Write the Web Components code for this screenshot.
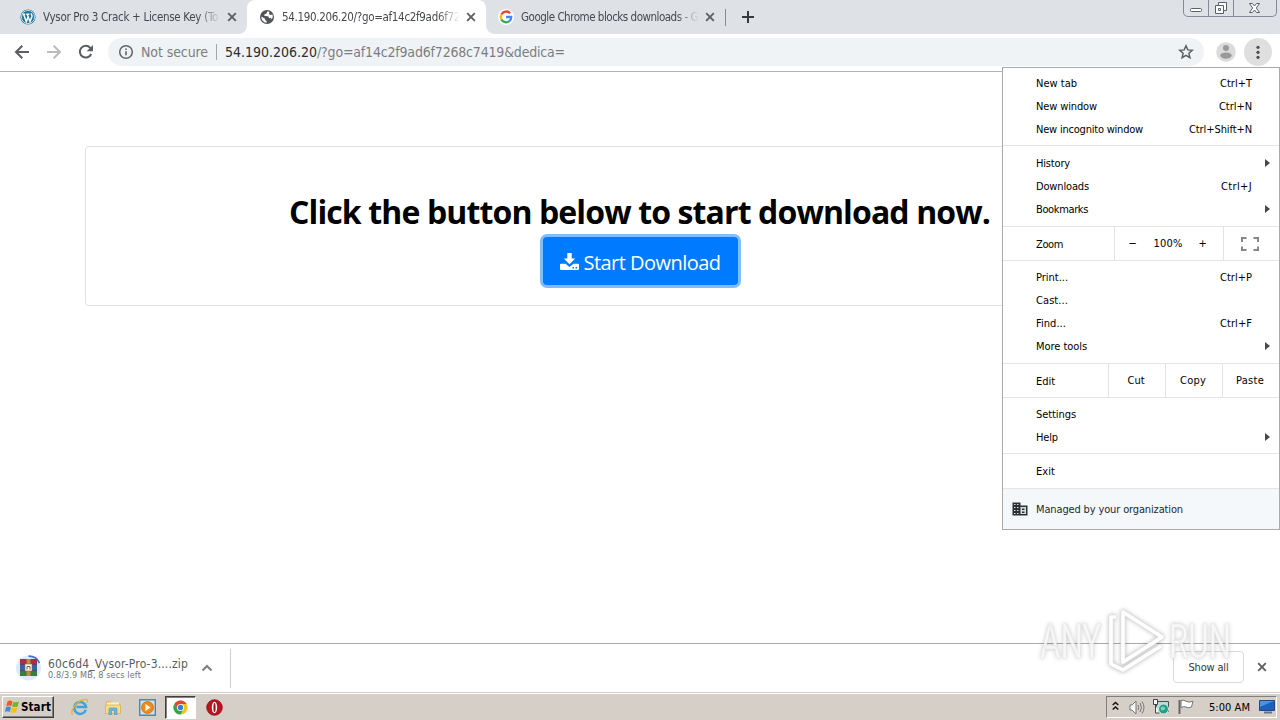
<!DOCTYPE html>
<html lang="en">
<head>
<meta charset="utf-8">
<title>54.190.206.20/?go=af14c2f9ad6f7268c7419&amp;dedica=</title>
<style>
html, body {
  margin: 0;
  height: 100%;
}

body {
  overflow: hidden;
  background: #fff;
  font-family: "DejaVu Sans Condensed", "DejaVu Sans", sans-serif;
}
</style>
</head>
<body>
<desktop-screen></desktop-screen>
<script>
// ================================================
// Icons
// ================================================
const ICONS = {
  wordpress: `<svg width="16" height="16" viewBox="0 0 16 16"><circle cx="8" cy="8" r="7.6" fill="#21759b"/><circle cx="8" cy="8" r="6.6" fill="none" stroke="#e6f1f6" stroke-width=".8"/><path d="M2.6 5.2h2.6M6.2 5.2h3.2M3.6 5.3l2.7 7.4 2-5.2M7.2 5.3l2.8 7.4 1.9-5c.5-1.5-.9-2.2-.5-3.4" fill="none" stroke="#fff" stroke-width="1.5"/></svg>`,
  globe: `<svg width="16" height="16" viewBox="0 0 16 16"><circle cx="8" cy="8" r="7" fill="#505357"/><path d="M2.3 7.5 6 9.8l.3 1.5 1.3.8v1.7A6 6 0 0 1 2.3 7.5zM8.6 2.2 7.2 4.8l-2 .8.4 1.5 3.4.2 1.4 2 1.9-.2.4 1.6a6 6 0 0 0 .9-5.2l-2.2.6-1.3-1.2.2-2.1z" fill="#fff"/></svg>`,
  google: `<svg width="16" height="16" viewBox="0 0 16 16"><circle cx="8" cy="8" r="8" fill="#fff"/><g fill="none" stroke-width="2.3"><path d="M12.1 4.3A5.3 5.3 0 0 0 3.4 5.4" stroke="#ea4335"/><path d="M3.4 5.4a5.4 5.4 0 0 0 0 5.2" stroke="#fbbc05"/><path d="M3.4 10.6a5.3 5.3 0 0 0 8 1.5" stroke="#34a853"/><path d="M11.4 12.1A5.2 5.2 0 0 0 13.2 8H8.1" stroke="#4285f4"/></g></svg>`,
  close: `<svg width="16" height="16" viewBox="0 0 16 16"><path d="m4.2 4.2 7.6 7.6m0-7.6-7.6 7.6" stroke="#5d6064" stroke-width="1.9"/></svg>`,
  plus: `<svg width="16" height="16" viewBox="0 0 16 16"><path d="M8 2v12M2 8h12" stroke="#36393d" stroke-width="2"/></svg>`,
  back: `<svg width="16" height="16" viewBox="0 0 16 16"><path d="M15 8H2.5M8.3 1.7 2 8l6.3 6.3" fill="none" stroke="#5a5d61" stroke-width="2"/></svg>`,
  forward: `<svg width="16" height="16" viewBox="0 0 16 16"><path d="M1 8h12.5M7.7 1.7 14 8l-6.3 6.3" fill="none" stroke="#babcbe" stroke-width="2"/></svg>`,
  reload: `<svg width="16" height="16" viewBox="0 0 16 16"><path d="M13.2 10a5.9 5.9 0 1 1-1-6.2l1.2 1.4" fill="none" stroke="#5a5d61" stroke-width="2"/><path d="M15 1v6.3H8.7z" fill="#5a5d61"/></svg>`,
  info: `<svg width="16" height="16" viewBox="0 0 16 16"><circle cx="8" cy="8" r="6.3" fill="none" stroke="#5f6368" stroke-width="1.5"/><path d="M8 7.2v4M8 4.4v1.6" stroke="#5f6368" stroke-width="1.6"/></svg>`,
  star: `<svg width="16" height="16" viewBox="0 0 16 16"><path d="m8 1.8 1.8 4.1 4.5.4-3.4 3 1 4.4L8 11.4l-3.9 2.3 1-4.4-3.4-3 4.5-.4z" fill="none" stroke="#5a5d62" stroke-width="1.5"/></svg>`,
  avatar: `<svg width="20" height="20" viewBox="0 0 20 20"><circle cx="10" cy="10" r="9.8" fill="#dbdbdb"/><circle cx="10" cy="6.1" r="3" fill="#999"/><ellipse cx="10" cy="13.6" rx="5.7" ry="3.2" fill="#999"/></svg>`,
  dots: `<svg width="28" height="28" viewBox="0 0 28 28"><circle cx="14" cy="14" r="14" fill="#dfdfdf"/><g fill="#4b4d50"><circle cx="14" cy="9.3" r="1.6"/><circle cx="14" cy="14.3" r="1.6"/><circle cx="14" cy="19.3" r="1.6"/></g></svg>`,
  minimize: `<svg width="24" height="16" viewBox="0 0 24 16"><rect x="6.5" y="8.5" width="11" height="3" rx="1" fill="#fff" stroke="#5b5f69"/></svg>`,
  restore: `<svg width="24" height="16" viewBox="0 0 24 16"><path d="M9.5 2.5h8v8h-8z" fill="#fff" stroke="#5b5f69"/><path d="M6.5 5.5h8v8h-8z" fill="#fff" stroke="#5b5f69"/><path d="M9.5 8.5h2v2h-2z" fill="#fff" stroke="#5b5f69"/></svg>`,
  winclose: `<svg width="41" height="16" viewBox="0 0 41 16"><path d="M15.5 3.5h3l2 2.5 2-2.5h3L22.3 8l3.2 4.5h-3l-2-2.5-2 2.5h-3L18.7 8z" fill="#fff" stroke="#5b5f69"/></svg>`,
  arrow: `<svg width="5" height="8" viewBox="0 0 5 8"><path d="M0 0v8l5-4z" fill="#494949"/></svg>`,
  fullscreen: `<svg width="18" height="14" viewBox="0 0 18 14"><path d="M5.5 1H1v4M12.5 1H17v4M1 9.5V13h4.5M17 9.5V13h-4.5" fill="none" stroke="#85888b" stroke-width="2"/></svg>`,
  building: `<svg width="16" height="14" viewBox="0 0 16 14"><path d="M.5.5h8v3h7v10H.5z" fill="#2b3035"/><path d="M2 2h1.5v1H2zM5 2h1.5v1H5zM2 5h1.5v1H2zM5 5h1.5v1H5zM2 8h1.5v1H2zM5 8h1.5v1H5zM2 11h1.5v1H2zM5 11h1.5v1H5zM8.5 5H14v7H8.5z" fill="#d9dee2"/><path d="M10 6.5h2.5V8H10zM10 9.5h2.5V11H10z" fill="#2b3035"/></svg>`,
  download: `<svg width="19" height="17" viewBox="0 0 19 17"><path d="M7.3 0h4.4v5.5h3.5L9.5 11.2 3.8 5.5h3.5z" fill="#fff"/><path d="M0 11.5Q0 10.8 1 10.8h4.5l4 3.1 4-3.1H18q1 0 1 .7v4.3q0 1.2-1 1.2H1q-1 0-1-1.2z" fill="#fff"/><path d="M12.5 14H14v1.5h-1.5zM15.5 14H17v1.5h-1.5z" fill="#007bff"/></svg>`,
  archive: `<svg width="26" height="26" viewBox="0 0 26 26"><circle cx="12.5" cy="13" r="12.5" fill="#dceafa"/><path d="M12.5 1.2A11.8 11.8 0 0 1 23.5 8" fill="none" stroke="#3977d0" stroke-width="1.8"/><rect x="4" y="4" width="17" height="5.5" fill="#b02a48"/><rect x="4" y="9.5" width="17" height="6" fill="#3762b2"/><rect x="4" y="15.5" width="17" height="5.5" fill="#397d3a"/><path d="M4 9.5h17M4 15.5h17" stroke="#31233e" stroke-width=".6"/><path d="M10.5 4h4v17h-4z" fill="#c08a3c"/><rect x="9" y="9" width="7" height="7" fill="#fbf8ee" stroke="#8a6a4a" stroke-width=".6"/><path d="M11 14.5v-3h3v3" fill="none" stroke="#805429"/></svg>`,
  up: `<svg width="12" height="8" viewBox="0 0 12 8"><path d="m1.5 6.500 4.5-4.5 4.5 4.500" fill="none" stroke="#7b7e82" stroke-width="2"/></svg>`,
  windows: `<svg width="15" height="16" viewBox="0 0 15 16"><path d="M2.5 2.5Q5 .8 7.5 2.4L6.3 7.2Q4 6 1.2 7.3z" fill="#ea5a22"/><path d="M8.3 2.8q2.5 1.2 5.7-.2l-1.4 4.9q-2.8 1.2-5.5 0z" fill="#72b52e"/><path d="M1 8.2q2.5-1.3 5 0l-1.3 4.7Q2.5 11.7 0 13z" fill="#398ed8"/><path d="M6.9 8.4q2.7 1.2 5.5 0L11 13.2q-2.7 1.2-5.4 0z" fill="#f6bd20"/></svg>`,
  ie: `<svg width="18" height="18" viewBox="0 0 18 18"><path d="M14.8 11.8A5.9 5.9 0 1 1 15 9H5.5" fill="none" stroke="#3ca4df" stroke-width="2.5"/><path d="M1.7 16.5C-1.5 13.5 5 4 12.5 1.7c4-1.2 4.5 1 3.5 2.9" fill="none" stroke="#e3b236" stroke-width="1.3"/></svg>`,
  folder: `<svg width="18" height="18" viewBox="0 0 18 18"><path d="M2 3h5l1 2h8v10H2z" fill="#e7be55"/><path d="M3 4.5h12v3H3z" fill="#fff2b4"/><path d="M1.5 7h15v8.5h-15z" fill="#f6dd83" stroke="#d5ac47" stroke-width=".7"/><path d="M5 16.5V11q0-1 1-1h6q1 0 1 1v5.5h-2.5v-4h-3v4z" fill="#6bb9e7" stroke="#428db9" stroke-width=".6"/></svg>`,
  media: `<svg width="17" height="17" viewBox="0 0 17 17"><path d="M.7.7h15.600v15.600H.7z" fill="#cce2f5" stroke="#5383b0" stroke-width="1.4"/><circle cx="8.5" cy="8.5" r="6" fill="#f18b16" stroke="#c56708" stroke-width=".7"/><path d="m6.5 5 5 3.5-5 3.5z" fill="#fff"/></svg>`,
  chrome: `<svg width="15" height="15" viewBox="0 0 16 16"><circle cx="8" cy="8" r="7.5" fill="#fbc116"/><path d="M1.5 4.25A7.5 7.5 0 0 1 14.5 4.25H8L4.75 9.875z" fill="#df4738"/><path d="M1.5 4.25A7.5 7.5 0 0 0 8 15.5L11.25 9.875H4.75z" fill="#30a251"/><circle cx="8" cy="8" r="3.8" fill="#fff"/><circle cx="8" cy="8" r="2.9" fill="#367edb"/></svg>`,
  opera: `<svg width="17" height="17" viewBox="0 0 17 17"><circle cx="8.5" cy="8.5" r="7.8" fill="#b91420" stroke="#891017" stroke-width=".8"/><ellipse cx="8.5" cy="8.5" rx="2.7" ry="5.7" fill="#fff"/><ellipse cx="8.5" cy="8.5" rx="1.100" ry="4.600" fill="#9c121a"/></svg>`,
  chevrons: `<svg width="7" height="10" viewBox="0 0 7 10"><path d="m.7 4 2.8-2.5L6.3 4M.7 8.5 3.5 6l2.8 2.5" fill="none" stroke="#111" stroke-width="1.5"/></svg>`,
  volume: `<svg width="16" height="15" viewBox="0 0 16 15"><path d="M1 5h2l4-4v13l-4-4H1z" fill="#f8f8f6" stroke="#777"/><path d="M9 5q1.5 2.5 0 5M11 3q3 4.5 0 9M13 1.5q4 6 0 12" fill="none" stroke="#777"/></svg>`,
  network: `<svg width="17" height="16" viewBox="0 0 17 16"><path d="M3.5 2.5h12v10h-12z" fill="#b7dcd5" stroke="#3f5555"/><path d="M.5.5h4v5h-4zM2.5 6v8h4" fill="#f5f5f1" stroke="#444"/><circle cx="10.5" cy="10" r="5" fill="#299c88" stroke="#d6eee8"/><path d="M7.5 9q3-3 5 .5-1 2-4 2z" fill="#7ed2bc"/></svg>`,
  flag: `<svg width="17" height="16" viewBox="0 0 17 16"><path d="M1.5 1v14" stroke="#666" stroke-width="2"/><path d="M3 1.5q3-1 5 .8 3 1.7 7-.1L13.5 8q-3 1.5-5.5 0Q6 7 3 8.5z" fill="#fff" stroke="#777"/></svg>`,
  monitor: `<svg width="16" height="14" viewBox="0 0 16 14"><path d="M.5.5h15v10H.5z" fill="#1d5fc1" stroke="#294a76"/><path d="M1 1h14L1 7z" fill="#4b90e1"/><path d="M5 12.5h8" stroke="#62758d" stroke-width="2"/></svg>`
};

// ================================================
// Shared elements
// ================================================
class UiElement extends HTMLElement {
  render(css, html) {
    if (!this.shadowRoot) this.attachShadow({ mode: 'open' });
    this.shadowRoot.innerHTML = `<style>* { box-sizing: border-box; }${css}</style>${html}`;
  }
}

class UiIcon extends UiElement {
  connectedCallback() {
    this.render(`:host { display: inline-flex; flex: none; } svg { display: block; }`, ICONS[this.getAttribute('name')]);
  }
}
customElements.define('ui-icon', UiIcon);

// Spreads its text over a fixed width by letter spacing
class UiText extends UiElement {
  connectedCallback() {
    this.render(`
:host { display: inline-block; flex: none; white-space: pre; }
span { display: inline-block; }
`, `<span><slot></slot></span>`);
    const width = Number(this.getAttribute('w'));
    const natural = this.shadowRoot.querySelector('span').getBoundingClientRect().width;
    if (!width || !natural) return;
    this.style.letterSpacing = `${(width - natural) / this.textContent.length}px`;
    this.style.width = `${width}px`;
  }
}
customElements.define('ui-text', UiText);

// ================================================
// Browser frame
// ================================================
class BrowserTab extends UiElement {
  connectedCallback() {
    this.render(`
:host { display: flex; align-items: center; flex: none; position: relative; width: 239px; height: 34px; padding-left: 12px; font-size: 11.5px; color: #45484d; }
:host([active]) { background: #fff; border-radius: 8px 8px 0 0; }
/* Curved feet of the selected tab */
:host([active])::before,
:host([active])::after { content: ""; position: absolute; bottom: 0; width: 8px; height: 8px; }
:host([active])::before { left: -8px; background: radial-gradient(circle at 0 0, transparent 7.5px, #fff 8px); }
:host([active])::after { right: -8px; background: radial-gradient(circle at 100% 0, transparent 7.5px, #fff 8px); }
.title { margin-left: 7px; width: 180px; overflow: hidden; mask-image: linear-gradient(90deg, #000 155px, transparent 178px); }
.close { margin-left: 1px; }
`, `<ui-icon name="${this.getAttribute('icon')}"></ui-icon>
<div class="title"><ui-text w="${this.getAttribute('w')}">${this.getAttribute('label')}</ui-text></div>
<ui-icon class="close" name="close"></ui-icon>`);
  }
}
customElements.define('browser-tab', BrowserTab);

class TabStrip extends UiElement {
  connectedCallback() {
    this.render(`
:host { display: flex; height: 34px; padding-left: 8px; background: #dee1e6; }
.divider { width: 1px; height: 17px; margin: 9px 14px 0 0; background: #888b90; }
.plus { margin-top: 9px; }
.controls { display: flex; width: 94px; height: 17px; margin: 0 3px 0 auto; border: 1px solid #858a96; border-top: 0; border-radius: 0 0 5px 5px; overflow: hidden; }
.controls ui-icon + ui-icon { border-left: 1px solid #858a96; }
`, `<browser-tab icon="wordpress" label="Vysor Pro 3 Crack + License Key (To" w="175"></browser-tab>
<browser-tab active icon="globe" label="54.190.206.20/?go=af14c2f9ad6f72" w="178"></browser-tab>
<browser-tab icon="google" label="Google Chrome blocks downloads - G" w="177"></browser-tab>
<div class="divider"></div><ui-icon class="plus" name="plus"></ui-icon>
<div class="controls"><ui-icon name="minimize"></ui-icon><ui-icon name="restore"></ui-icon><ui-icon name="winclose"></ui-icon></div>`);
  }
}
customElements.define('tab-strip', TabStrip);

class BrowserToolbar extends UiElement {
  connectedCallback() {
    this.render(`
:host { display: flex; align-items: center; height: 38px; padding: 0 8px 1px 14px; box-sizing: border-box; border-bottom: 1px solid #b3b3b3; background: #fff; font-size: 14px; }
.nav { display: flex; gap: 16px; }
.address { display: flex; align-items: center; width: 1096px; height: 28px; margin-left: 14px; padding: 0 10px; border-radius: 14px; background: #f0f3f5; color: #7a7e82; }
.secure { margin-left: 7px; }
.divider { width: 1px; height: 16px; margin: 0 8px; background: #a4a7aa; }
.host { color: #2b2d30; }
.star { margin-left: auto; }
.avatar { margin: 0 8px 0 12px; }
`, `<div class="nav"><ui-icon name="back"></ui-icon><ui-icon name="forward"></ui-icon><ui-icon name="reload"></ui-icon></div>
<div class="address"><ui-icon name="info"></ui-icon><ui-text class="secure" w="67">Not secure</ui-text><div class="divider"></div>
<ui-text class="host" w="92">54.190.206.20</ui-text><ui-text w="248">/?go=af14c2f9ad6f7268c7419&amp;dedica=</ui-text><ui-icon class="star" name="star"></ui-icon></div>
<ui-icon class="avatar" name="avatar"></ui-icon><ui-icon name="dots"></ui-icon>`);
  }
}
customElements.define('browser-toolbar', BrowserToolbar);

// ================================================
// Page
// ================================================
class DownloadCard extends UiElement {
  connectedCallback() {
    this.render(`
:host { display: flex; flex-direction: column; align-items: center; box-sizing: border-box; width: 1110px; height: 160px; margin: 74px auto 0; padding-top: 41px; border: 1px solid #dfdfdf; border-radius: 4px; font-family: "Open Sans", "Noto Sans", sans-serif; }
h1 { margin: 0 1px 0 0; height: 49px; font-size: 32px; line-height: 47px; font-weight: 700; color: #000; }
button { display: flex; align-items: center; width: 195px; height: 48px; padding: 0 0 0 17px; border: 0; border-radius: 4px; background: #007bff; box-shadow: 0 0 0 3px #80bdff; color: #fff; font: 20px "Open Sans", "Noto Sans", sans-serif; }
button ui-text { margin-left: 5px; padding-top: 2px; }
`, `<h1><ui-text w="701">Click the button below to start download now.</ui-text></h1>
<button><ui-icon name="download"></ui-icon><ui-text w="137">Start Download</ui-text></button>`);
  }
}
customElements.define('download-card', DownloadCard);

// ================================================
// Browser menu
// ================================================
class MenuItem extends UiElement {
  connectedCallback() {
    const keys = this.getAttribute('keys');
    this.render(`
:host { display: flex; align-items: center; height: 23px; padding-left: 33px; }
.keys { margin: 0 27px 0 auto; }
.arrow { margin: -1px 9px 0 auto; }
`, `<ui-text w="${this.getAttribute('w')}">${this.getAttribute('label')}</ui-text>
${keys ? `<ui-text class="keys" w="${this.getAttribute('kw')}">${keys}</ui-text>` : ''}
${this.hasAttribute('submenu') ? '<ui-icon class="arrow" name="arrow"></ui-icon>' : ''}`);
  }
}
customElements.define('menu-item', MenuItem);

class BrowserMenu extends UiElement {
  connectedCallback() {
    this.render(`
:host { display: block; box-sizing: border-box; width: 278px; height: 463px; border: 1px solid #aaa; background: #fff; color: #000; font-size: 11px; }
section { border-bottom: 1px solid #e4e4e4; }
.new { padding: 4px 0; }
.history { padding: 6px 0 5px; }
.tools { padding: 5px 0; }
.settings { padding: 5px 0 4px; }
.exit { padding: 6px 0 5px; }
.split { display: flex; height: 34px; }
.split > * { display: flex; align-items: center; justify-content: center; padding-right: 2px; border-left: 1px solid #e4e4e4; }
.split > :first-child { justify-content: flex-start; padding: 2px 0 0 33px; border: 0; }
.split > .zoom { gap: 16px; width: 109px; }
.edit { width: 57px; }
footer { display: flex; align-items: center; gap: 8px; height: 40px; padding-left: 9px; background: #f4f8fb; color: #25292d; }
`, `<section class="new">
<menu-item label="New tab" w="41" keys="Ctrl+T" kw="32"></menu-item>
<menu-item label="New window" w="61" keys="Ctrl+N" kw="33"></menu-item>
<menu-item label="New incognito window" w="107" keys="Ctrl+Shift+N" kw="63"></menu-item>
</section>
<section class="history">
<menu-item label="History" w="34" submenu></menu-item>
<menu-item label="Downloads" w="53" keys="Ctrl+J" kw="31"></menu-item>
<menu-item label="Bookmarks" w="52" submenu></menu-item>
</section>
<section class="split"><div style="width: 111px"><ui-text w="27">Zoom</ui-text></div>
<div class="zoom"><ui-text w="9">−</ui-text><ui-text w="29">100%</ui-text><ui-text w="9">+</ui-text></div><div style="width: 55px"><ui-icon name="fullscreen"></ui-icon></div></section>
<section class="tools">
<menu-item label="Print..." w="32" keys="Ctrl+P" kw="32"></menu-item>
<menu-item label="Cast..." w="32"></menu-item>
<menu-item label="Find..." w="30" keys="Ctrl+F" kw="32"></menu-item>
<menu-item label="More tools" w="51" submenu></menu-item>
</section>
<section class="split"><div style="width: 105px"><ui-text w="19">Edit</ui-text></div>
<div class="edit"><ui-text w="17">Cut</ui-text></div><div class="edit"><ui-text w="26">Copy</ui-text></div><div class="edit"><ui-text w="28">Paste</ui-text></div></section>
<section class="settings">
<menu-item label="Settings" w="40"></menu-item>
<menu-item label="Help" w="22" submenu></menu-item>
</section>
<section class="exit"><menu-item label="Exit" w="19"></menu-item></section>
<footer><ui-icon name="building"></ui-icon><ui-text w="147">Managed by your organization</ui-text></footer>`);
  }
}
customElements.define('browser-menu', BrowserMenu);

// ================================================
// Downloads and taskbar
// ================================================
class DownloadShelf extends UiElement {
  connectedCallback() {
    this.render(`
:host { display: flex; align-items: center; box-sizing: border-box; height: 49px; border-top: 1px solid #aaa; background: #fff; color: #595c60; }
.item { display: flex; align-items: center; width: 231px; height: 39px; padding-left: 16px; border-right: 1px solid #cfcfcf; }
.labels { display: flex; flex-direction: column; width: 140px; margin: 0 13px 0 6px; padding-top: 2px; }
.name { font-size: 12px; line-height: 13px; }
.status { font-size: 9px; line-height: 9px; color: #707478; }
button { width: 71px; height: 32px; margin: -2px 10px 0 auto; padding: 0; border: 1px solid #d9dadc; border-radius: 4px; background: #fff; font: inherit; font-size: 11px; color: #34373b; }
.close { margin: -2px 10px 0 0; }
`, `<div class="item"><ui-icon name="archive"></ui-icon>
<div class="labels"><ui-text class="name" w="140">60c6d4_Vysor-Pro-3....zip</ui-text><ui-text class="status" w="93">0.8/3.9 MB, 8 secs left</ui-text></div>
<ui-icon name="up"></ui-icon></div>
<button><ui-text w="40">Show all</ui-text></button><ui-icon class="close" name="close"></ui-icon>`);
  }
}
customElements.define('download-shelf', DownloadShelf);

class TaskBar extends UiElement {
  connectedCallback() {
    this.render(`
:host { display: flex; align-items: center; box-sizing: border-box; height: 28px; padding: 1px 3px 0 2px; background: #d6cfc7; border-top: 1px solid #d6cfc7; box-shadow: inset 0 1px #fff; }
.start { display: flex; align-items: center; gap: 1px; width: 52px; height: 22px; padding-left: 2px; border: 1px solid; border-color: #fff #404040 #404040 #fff; box-shadow: inset -1px -1px #808080; font-size: 11.5px; font-weight: 700; color: #000; }
.links { display: flex; align-items: center; margin-left: 17px; }
.links > :nth-child(2) { margin-left: 15px; }
.links > :nth-child(3) { margin-left: 17px; }
.active { display: flex; align-items: center; justify-content: center; width: 31px; height: 23px; margin: 0 10px 0 9px; border: 1px solid; border-color: #404040 #fff #fff #404040; box-shadow: inset 1px 1px #808080; background: #fff; }
.tray { display: flex; align-items: center; width: 171px; height: 22px; margin-left: auto; padding-left: 6px; border: 1px solid; border-color: #808080 #fff #fff #808080; font-size: 11px; color: #000; }
.tray > :first-child { margin: -2px 0 0 -1px; }
.volume { margin-left: 10px; }
.network, .flag { margin-left: 8px; }
.clock { margin-left: 14px; }
.monitor { margin-left: 9px; }
`, `<div class="start"><ui-icon name="windows"></ui-icon><ui-text w="30">Start</ui-text></div>
<div class="links"><ui-icon name="ie"></ui-icon><ui-icon name="folder"></ui-icon><ui-icon name="media"></ui-icon><div class="active"><ui-icon name="chrome"></ui-icon></div><ui-icon name="opera"></ui-icon></div>
<div class="tray"><ui-icon name="chevrons"></ui-icon><ui-icon class="volume" name="volume"></ui-icon><ui-icon class="network" name="network"></ui-icon><ui-icon class="flag" name="flag"></ui-icon><ui-text class="clock" w="41">5:00 AM</ui-text><ui-icon class="monitor" name="monitor"></ui-icon></div>`);
  }
}
customElements.define('task-bar', TaskBar);

class RunWatermark extends UiElement {
  connectedCallback() {
    this.render(`
:host { display: block; pointer-events: none; }
svg { display: block; overflow: visible; filter: drop-shadow(0 0 2px #0004); }
text { font: 49px Roboto, sans-serif; }
`, `<svg width="210" height="76" viewBox="0 0 210 76" fill="#fff" fill-opacity=".75" stroke="#e4e4e4" stroke-width=".5">
<text x="10" y="51" textLength="61" lengthAdjust="spacingAndGlyphs">ANY</text><text x="139" y="51" textLength="62" lengthAdjust="spacingAndGlyphs">RUN</text>
<g fill="none" stroke-linejoin="round"><path d="M93 5 132 30 93 55zM86 10h-5v47l12 6 38-24" stroke="#dedede" stroke-width="4.8"/><path d="M93 5 132 30 93 55zM86 10h-5v47l12 6 38-24" stroke="#fff" stroke-width="3.6"/></g></svg>`);
  }
}
customElements.define('run-watermark', RunWatermark);

// ================================================
// Screen
// ================================================
class DesktopScreen extends UiElement {
  connectedCallback() {
    this.render(`
:host { display: flex; flex-direction: column; position: relative; width: 1280px; height: 720px; overflow: hidden; background: #fff; }
main { flex: 1; min-height: 0; overflow: hidden; }
browser-menu { position: absolute; top: 67px; right: 0; }
run-watermark { position: absolute; left: 1030px; top: 607px; }
`, `<tab-strip></tab-strip>
<browser-toolbar></browser-toolbar>
<main><download-card></download-card></main>
<download-shelf></download-shelf>
<task-bar></task-bar>
<browser-menu></browser-menu>
<run-watermark></run-watermark>`);
  }
}
customElements.define('desktop-screen', DesktopScreen);
</script>
</body>
</html>
